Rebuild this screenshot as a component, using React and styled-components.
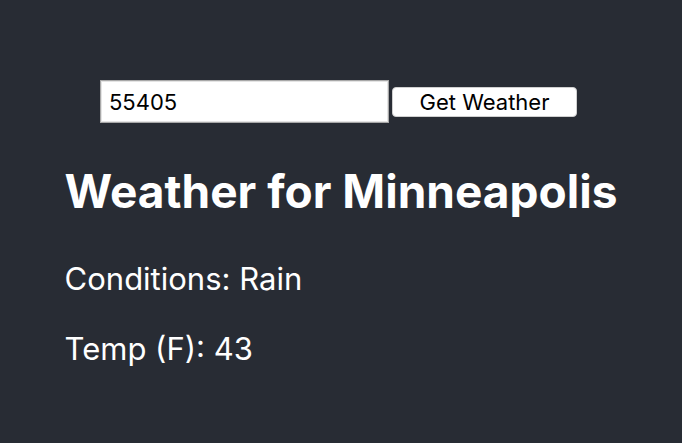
import styled, { createGlobalStyle } from 'styled-components';

const GlobalStyle = createGlobalStyle`
  body {
    margin: 0;
    background-color: #282c34;
    font-family: Inter, "Noto Sans", sans-serif;
  }
`;

const Page = styled.div`
  min-height: 100vh;
  display: flex;
  justify-content: center;
  color: white;
`;

const Content = styled.div`
  padding-top: 80px;
  display: flex;
  flex-direction: column;
`;

const Form = styled.form`
  display: flex;
  justify-content: center;
  align-items: center;
  gap: 3px;
  padding-right: 5px;
`;

const ZipInput = styled.input`
  box-sizing: border-box;
  width: 289px;
  height: 43px;
  padding: 0 8px;
  border: 1px solid #a8a8a8;
  box-shadow: inset 0 0 0 1px #e4e4e4;
  background: white;
  font-family: Inter, sans-serif;
  font-size: 22px;
  color: black;
  outline: none;
`;

const Button = styled.button`
  box-sizing: border-box;
  width: 185px;
  height: 30px;
  border: 1px solid #d0d0d0;
  border-radius: 4px;
  background: white;
  color: black;
  font-family: Inter, sans-serif;
  font-size: 22px;
  padding: 0;
`;

const Title = styled.h1`
  margin: 41px 0 0 0;
  font-size: 46px;
  font-weight: 700;
  line-height: 1.2;
`;

const Line = styled.p`
  margin: ${props => props.first ? "41px" : "33px"} 0 0 0;
  font-size: 31px;
  font-weight: 400;
  line-height: 1.2;
`;

const App = () => {
  return (
    <Page>
      <GlobalStyle />
      <Content>
        <Form onSubmit={e => e.preventDefault()}>
          <ZipInput defaultValue="55405" />
          <Button type="submit">Get Weather</Button>
        </Form>
        <Title>Weather for Minneapolis</Title>
        <Line first>Conditions: Rain</Line>
        <Line>Temp (F): 43</Line>
      </Content>
    </Page>
  );
};

export default App;
